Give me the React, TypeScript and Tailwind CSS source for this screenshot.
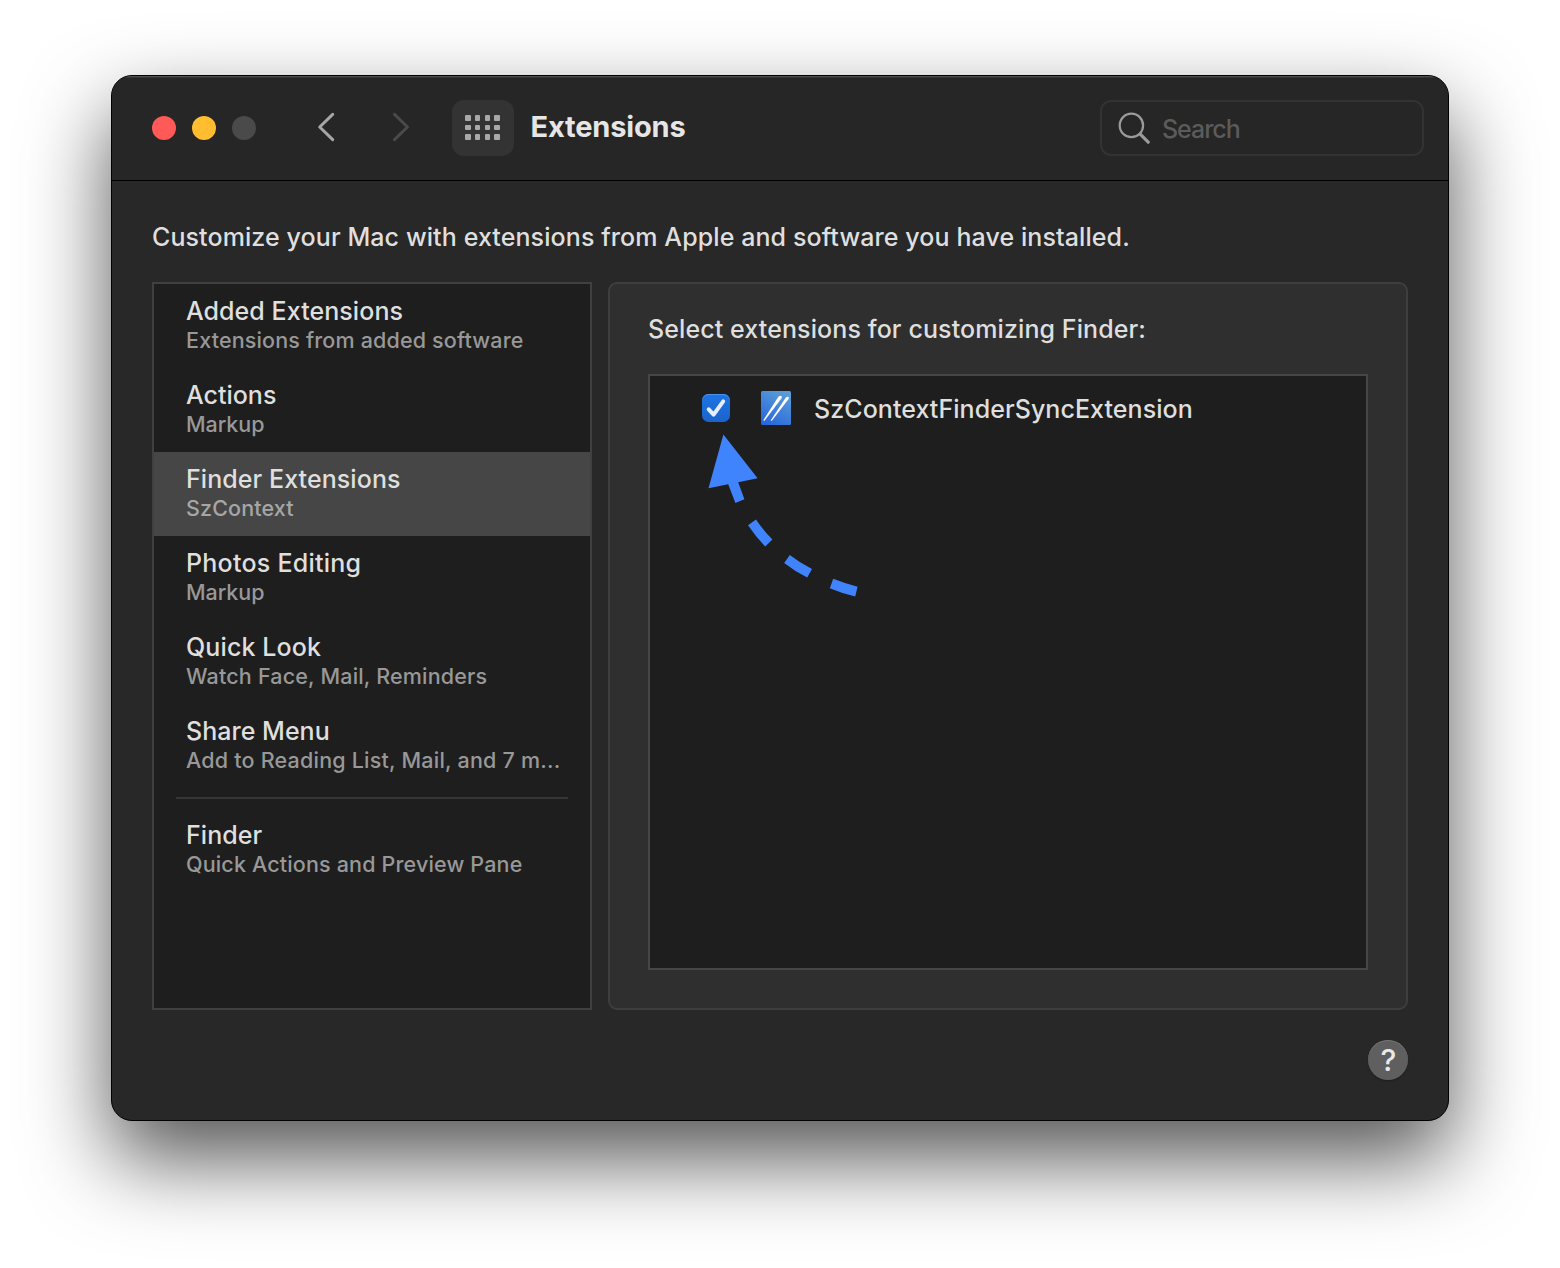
type Category = {
  name: string;
  detail: string;
  nameGap: string;
  detailGap: string;
  selected?: boolean;
};

const categories: Category[] = [
  { name: "Added Extensions", detail: "Extensions from added software", nameGap: "tracking-[0.06px]", detailGap: "tracking-[0.16px]" },
  { name: "Actions", detail: "Markup", nameGap: "tracking-[0px]", detailGap: "tracking-[-0.04px]" },
  { name: "Finder Extensions", detail: "SzContext", nameGap: "tracking-[0.07px]", detailGap: "tracking-[0.14px]", selected: true },
  { name: "Photos Editing", detail: "Markup", nameGap: "tracking-[0.25px]", detailGap: "tracking-[-0.04px]" },
  { name: "Quick Look", detail: "Watch Face, Mail, Reminders", nameGap: "tracking-[0.12px]", detailGap: "tracking-[0.18px]" },
  { name: "Share Menu", detail: "Add to Reading List, Mail, and 7 m...", nameGap: "tracking-[0.02px]", detailGap: "tracking-[0.21px]" },
];

const finder: Category = {
  name: "Finder",
  detail: "Quick Actions and Preview Pane",
  nameGap: "tracking-[0.08px]",
  detailGap: "tracking-[0.16px]",
};

function CategoryRow({ item }: { item: Category }) {
  return (
    <li className={`flex h-[84px] flex-col px-8 pt-3 whitespace-nowrap ${item.selected ? "bg-[#464646]" : ""}`}>
      <span className={`text-[25px] leading-[30px] text-[#dfdfdf] ${item.nameGap}`}>{item.name}</span>
      <span className={`text-[21.5px] leading-7 ${item.selected ? "text-[#a6a6a6]" : "text-[#989898]"} ${item.detailGap}`}>
        {item.detail}
      </span>
    </li>
  );
}

function TitleBar() {
  return (
    <header className="flex h-[105px] items-center border-b border-black bg-[#262626] pr-6 pl-10 shadow-[inset_0_1px_0_#505050,inset_0_2px_0_#343434]">
      <div className="flex gap-4">
        <span className="size-6 rounded-full bg-[#ff5958]" />
        <span className="size-6 rounded-full bg-[#ffbd2f]" />
        <span className="size-6 rounded-full bg-[#4a4a4a]" />
      </div>
      <div className="ml-[60px] flex gap-[56px]">
        <svg width="20" height="32" viewBox="0 0 20 32" fill="none" stroke="#a6a6a6" strokeWidth="3" strokeLinecap="round" strokeLinejoin="round">
          <path d="M16.7 2.4 3.7 15l13 12.6" />
        </svg>
        <svg width="20" height="32" viewBox="0 0 20 32" fill="none" stroke="#4a4a4a" strokeWidth="3" strokeLinecap="round" strokeLinejoin="round">
          <path d="M2.5 2.4 15.5 15l-13 12.6" />
        </svg>
      </div>
      <div className="ml-10 flex h-14 w-[62px] items-center justify-center rounded-xl bg-[#333333] pr-px pb-px">
        <div className="grid grid-cols-4 gap-x-[4.2px] gap-y-[4px]">
          {Array.from({ length: 12 }, (_, i) => (
            <span key={i} className="size-[5.7px] rounded-[1px] bg-[#a8a8a8]" />
          ))}
        </div>
      </div>
      <h1 className="ml-[16.5px] pb-0.5 text-[29px] leading-9 font-bold tracking-[-0.16px] text-[#e6e6e6]">Extensions</h1>
      <div className="ml-auto flex h-14 w-[324px] items-center rounded-[11px] border-2 border-[#333333] pl-4">
        <svg width="32" height="32" viewBox="0 0 32 32" fill="none" stroke="#9b9b9b" strokeLinecap="round">
          <circle cx="13.4" cy="13.4" r="11.7" strokeWidth="2.2" />
          <path d="m22.2 22.2 8 8" strokeWidth="3.2" />
        </svg>
        <span className="ml-3 pt-0.5 text-[25px] leading-[30px] tracking-[-1.05px] text-[#5b5b5b]">Search</span>
      </div>
    </header>
  );
}

function Pointer() {
  return (
    <svg className="absolute top-[54px] left-[54px]" width="160" height="170" viewBox="704 430 160 170" fill="#3f83fd">
      <path d="M723.4 434.5 757.6 478.3 738.2 482.3 744.4 499.2 735.4 503 728.2 484.3 708.5 488.2Z" />
      <path d="M748 525.2 756 519.4Q763.5 530.5 772.4 539.5L765.2 546.4Q756 537 748 525.2Z" />
      <path d="M784.2 563 789.8 555Q800 563 812 568.9L807.2 577.6Q795 571.5 784.2 563Z" />
      <path d="M829.8 588.3 833.2 578.8Q845 583.5 857.6 586.8L855.2 596.5Q842 593.5 829.8 588.3Z" />
    </svg>
  );
}

export default function App() {
  return (
    <main className="h-[1268px] w-[1560px] overflow-hidden bg-white px-[111px] pt-[75px] font-['Inter',sans-serif] font-medium">
      <section className="h-[1046px] w-[1338px] overflow-hidden rounded-[21px] border border-black bg-[#282828] shadow-[0_38px_84px_rgba(0,0,0,0.67)]">
        <TitleBar />
        <div className="px-10 pt-10">
          <p className="text-[25px] leading-8 tracking-[0.095px] whitespace-nowrap text-[#dfdfdf]">
            Customize your Mac with extensions from Apple and software you have installed.
          </p>
          <div className="mt-[29px] flex gap-4">
            <ul className="h-[728px] w-[440px] border-2 border-[#404040] bg-[#1e1e1e]">
              {categories.map((item) => (
                <CategoryRow key={item.name} item={item} />
              ))}
              <li className="mx-[22px] my-[9px] h-0.5 bg-[#373737]" />
              <CategoryRow item={finder} />
            </ul>
            <div className="h-[728px] w-[800px] rounded-[9px] border-2 border-[#3e3e3e] bg-[#2f2f2f] px-[38px] pt-[29px]">
              <p className="text-[25px] leading-8 tracking-[0.1px] text-[#dfdfdf]">Select extensions for customizing Finder:</p>
              <div className="relative mt-[29px] h-[596px] w-[720px] border-2 border-[#464646] bg-[#1e1e1e]">
                <div className="flex h-16 items-center pl-[52px]">
                  <span className="flex size-7 items-center justify-center rounded-[6.5px] bg-linear-to-b from-[#1e74e6] to-[#1a64cb] shadow-[inset_0_1px_0_#4b93ee]">
                    <svg width="28" height="28" viewBox="0 0 28 28" fill="none" stroke="#e6effb" strokeWidth="4" strokeLinecap="round" strokeLinejoin="round">
                      <path d="m6.7 15.3 4.9 5.3L21.2 7.4" />
                    </svg>
                  </span>
                  <svg className="ml-[31px]" width="30" height="34" viewBox="0 0 30 34">
                    <defs>
                      <linearGradient id="badge" x1="0.2" y1="1" x2="0.7" y2="0">
                        <stop offset="0" stopColor="#2866dc" />
                        <stop offset="1" stopColor="#5a9cd8" />
                      </linearGradient>
                    </defs>
                    <rect width="30" height="34" rx="1.5" fill="url(#badge)" />
                    <path d="M2.3 29.3 17.2 6.1Q19 4.2 20.4 5.1 21.4 6 20.4 7.6L3.3 30Z" fill="#fff" />
                    <path d="M9.8 29.3 24.5 7.1Q26.3 5 27.5 5.9 28.4 6.8 27.4 8.3L10.7 30Z" fill="#fff" />
                  </svg>
                  <span className="ml-[23px] pt-0.5 text-[25px] leading-8 tracking-[0.06px] text-[#dfdfdf]">SzContextFinderSyncExtension</span>
                </div>
                <Pointer />
              </div>
            </div>
          </div>
          <div className="mt-[30px] flex justify-end">
            <span className="flex size-10 items-center justify-center rounded-full bg-[#5f5f5f] pl-px text-[30px] leading-10 text-[#e8e8e8] shadow-[inset_0_1px_0_#737373,0_1px_2px_rgba(0,0,0,0.3)]">
              ?
            </span>
          </div>
        </div>
      </section>
    </main>
  );
}
